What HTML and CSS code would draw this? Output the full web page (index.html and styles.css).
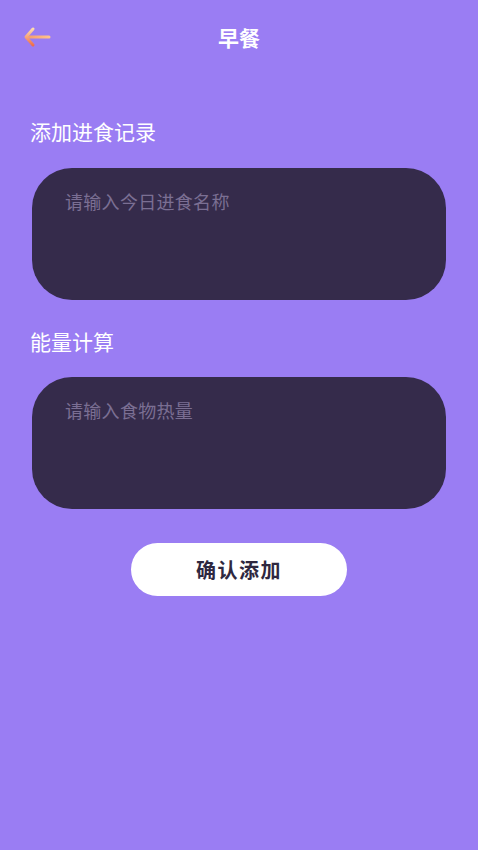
FILE: index.html
```html
<!DOCTYPE html>
<html lang="zh">
<head>
<meta charset="utf-8">
<title>早餐</title>
<link rel="stylesheet" href="styles.css">
</head>
<body>
<div class="page">
  <header class="header">
    <div class="back">
      <svg width="30" height="22" viewBox="0 0 30 22">
        <defs>
          <linearGradient id="g" gradientUnits="userSpaceOnUse" x1="0" y1="2" x2="0" y2="20">
            <stop offset="0" stop-color="#ffe0b0"/>
            <stop offset="1" stop-color="#ee6a48"/>
          </linearGradient>
          <linearGradient id="g2" gradientUnits="userSpaceOnUse" x1="4" y1="0" x2="28" y2="0">
            <stop offset="0" stop-color="#f59a6a"/>
            <stop offset="1" stop-color="#ffc48e"/>
          </linearGradient>
        </defs>
        <path d="M6 11 H27" fill="none" stroke="url(#g2)" stroke-width="3" stroke-linecap="round"/>
        <path d="M11 3 L4 11 L11 19" fill="none" stroke="url(#g)" stroke-width="3" stroke-linecap="round" stroke-linejoin="round"/>
      </svg>
    </div>
    <h1 class="title">早餐</h1>
  </header>

  <section class="form">
    <div class="label label-first">添加进食记录</div>
    <div class="field"><span class="placeholder">请输入今日进食名称</span></div>
    <div class="label label-second">能量计算</div>
    <div class="field"><span class="placeholder">请输入食物热量</span></div>
    <div class="actions">
      <button class="btn">确认添加</button>
    </div>
  </section>
</div>
</body>
</html>
```

FILE: styles.css
```css
* { box-sizing: border-box; }
html, body {
  margin: 0;
  padding: 0;
  background: #9a7df3;
  font-family: "Noto Sans CJK SC", "Noto Sans", sans-serif;
}
.page {
  width: 478px;
  min-height: 850px;
  background: #9a7df3;
}
.header {
  position: relative;
  height: 76px;
  display: flex;
  align-items: center;
  justify-content: center;
  padding-bottom: 3px;
}
.back {
  position: absolute;
  left: 22px;
  top: 26px;
  width: 30px;
  height: 22px;
  display: flex;
}
.title {
  margin: 0;
  font-size: 21px;
  font-weight: 700;
  color: #ffffff;
  line-height: 30px;
}
.form {
  padding: 0 32px 0 32px;
}
.label {
  font-size: 21px;
  line-height: 30px;
  color: #ffffff;
  margin-left: -2px;
}
.label-first {
  margin-top: 40px;
  margin-bottom: 22px;
}
.label-second {
  margin-top: 26px;
  margin-bottom: 21px;
}
.field {
  height: 132px;
  border-radius: 40px;
  background: #352b4b;
  padding: 20px 33px;
}
.placeholder {
  font-size: 18px;
  line-height: 26px;
  color: #7b6f93;
  letter-spacing: 0.3px;
}
.actions {
  display: flex;
  justify-content: center;
  margin-top: 34px;
}
.btn {
  width: 216px;
  height: 53px;
  border: none;
  border-radius: 27px;
  background: #ffffff;
  color: #2f2840;
  font-family: "Noto Sans CJK SC", "Noto Sans", sans-serif;
  font-size: 20px;
  font-weight: 700;
  letter-spacing: 1.5px;
  padding: 0;
}
```
